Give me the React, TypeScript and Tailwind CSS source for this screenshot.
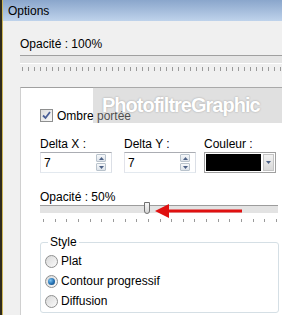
import React from "react";

function Spinner() {
  return (
    <div className="flex w-[10px] flex-col gap-[1px] py-[1px]">
      {[0, 1].map((i) => (
        <div
          key={i}
          className="flex h-[9px] items-center justify-center rounded-[1px] border border-[#b9c3cc] bg-linear-to-b from-[#f6f8fa] to-[#dde3ea]"
        >
          <svg width="5" height="3" viewBox="0 0 5 3">
            {i === 0 ? (
              <path d="M0 3 L2.5 0 L5 3 Z" fill="#4d6185" />
            ) : (
              <path d="M0 0 L2.5 3 L5 0 Z" fill="#4d6185" />
            )}
          </svg>
        </div>
      ))}
    </div>
  );
}

function NumInput({ label, value }: { label: string; value: string }) {
  return (
    <div className="flex w-[72px] flex-col">
      <div className="h-[16px]">{label}</div>
      <div className="flex h-[21px] items-stretch justify-between border border-[#abadb3] border-b-[#e3e9ef] border-l-[#e2e3ea] border-r-[#dbdfe6] bg-white pl-[3px] pr-[5px]">
        <div className="flex items-center pt-[1px]">{value}</div>
        <Spinner />
      </div>
    </div>
  );
}

function Radio({ checked, label }: { checked?: boolean; label: string }) {
  return (
    <div className="flex h-[20px] items-center gap-[3px]">
      <div className="flex h-[13px] w-[13px] items-center justify-center rounded-full border border-[#8e8f8f] bg-linear-to-br from-[#d8d8d8] to-[#fbfbfb]">
        {checked && (
          <div className="h-[7px] w-[7px] rounded-full bg-radial-[at_35%_35%] from-[#7fc4f0] via-[#2a77b8] to-[#0f3e6c]" />
        )}
      </div>
      <span>{label}</span>
    </div>
  );
}

export default function App() {
  return (
    <div className="relative flex h-[315px] w-[282px] overflow-hidden bg-[#f0f0f0] font-['Liberation_Sans',Arial,sans-serif] text-[12px] leading-[16px] text-black">
      <div className="flex w-[3px] shrink-0">
        <div className="w-[2px] bg-[#2e2a1c]" />
        <div className="w-[1px] bg-[#cdb65a]" />
      </div>
      <div className="flex min-w-0 flex-1 flex-col">
        <div className="flex h-[21px] shrink-0 items-center bg-linear-to-b from-[#8aa6cc] to-[#bfd3eb] pl-[5px]">
          Options
        </div>
        <div className="flex flex-1 flex-col pl-[17px]">
          <div className="mt-[15px] h-[16px]">Opacité : 100%</div>
          <div className="mt-[3px] h-[9px] border-y border-t-[#a0a0a0] border-b-white bg-[#e5e5e5]" />
          <div className="mt-[3px] ml-[2px] h-[4px] bg-[repeating-linear-gradient(90deg,#9a9a9a_0_1px,transparent_1px_6px)]" />
          <div className="mt-[16px] flex flex-1 flex-col border-l border-t border-l-[#d0d0d0] border-t-[#a0a0a0] bg-white pl-[19px]">
            <div className="mt-[21px] flex h-[13px] items-center gap-[4px]">
              <div className="flex h-[13px] w-[13px] items-center justify-center border border-[#8e8f8f] bg-linear-to-br from-[#dcdcdc] to-[#fafafa]">
                <svg width="9" height="9" viewBox="0 0 9 9">
                  <path d="M1 4.5 L3.5 7 L8 1" stroke="#4a5f97" strokeWidth="1.8" fill="none" />
                </svg>
              </div>
              <span>Ombre portée</span>
            </div>
            <div className="mt-[14px] flex">
              <NumInput label="Delta X :" value="7" />
              <div className="w-[12px]" />
              <NumInput label="Delta Y :" value="7" />
              <div className="w-[8px]" />
              <div className="flex w-[72px] flex-col">
                <div className="h-[16px]">Couleur :</div>
                <div className="flex h-[21px] items-stretch gap-[2px] border border-[#a0a0a0] bg-white p-[1px]">
                  <div className="w-[55px] bg-black" />
                  <div className="flex flex-1 items-center justify-center border border-[#c4c4c4] bg-linear-to-b from-[#f2f2f2] to-[#d9d9d9]">
                    <svg width="5" height="3" viewBox="0 0 5 3">
                      <path d="M0 0 L2.5 3 L5 0 Z" fill="#4d6185" />
                    </svg>
                  </div>
                </div>
              </div>
            </div>
            <div className="mt-[16px] h-[16px]">Opacité : 50%</div>
            <div className="relative mt-[0px] h-[8px] w-[238px] border-t border-t-[#9c9c9c] bg-[#e3e3e3]">
              <div className="absolute left-[104px] top-[-4px] h-[12px] w-[6px] rounded-b-[3px] border border-[#707070] bg-linear-to-b from-[#f8f8f8] to-[#d6d6d6]" />
            </div>
            <div className="mt-[6px] ml-[3px] h-[3px] w-[236px] bg-[repeating-linear-gradient(90deg,#9a9a9a_0_1px,transparent_1px_11.65px)]" />
            <fieldset className="mt-[12px] w-[239px] rounded-[3px] border border-[#d5dfe5] pb-[1px] pl-[4px]">
              <legend className="ml-[3px] px-[2px]">Style</legend>
              <div className="flex flex-col pt-[1px]">
                <Radio label="Plat" />
                <Radio checked label="Contour progressif" />
                <Radio label="Diffusion" />
              </div>
            </fieldset>
          </div>
        </div>
      </div>
      <div className="absolute left-[93px] top-[87px] flex h-[36px] w-[189px] items-center bg-[rgba(180,180,180,0.42)] pl-[9px]">
        <span className="font-['Liberation_Sans',Arial,sans-serif] text-[20px] font-bold tracking-[-1px] text-white [text-shadow:0_0_2px_rgba(0,0,0,0.3)]">
          PhotofiltreGraphic
        </span>
      </div>
      <svg className="absolute left-[155px] top-[203px]" width="88" height="16" viewBox="0 0 88 16">
        <path d="M12 8 L87 8" stroke="#e01010" strokeWidth="3" />
        <path d="M0 8 L14 1 L14 15 Z" fill="#e01010" />
      </svg>
    </div>
  );
}
